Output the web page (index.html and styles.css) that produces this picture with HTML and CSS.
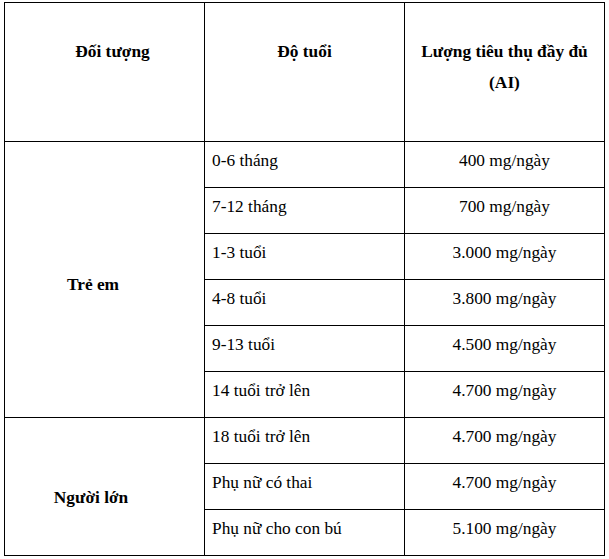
FILE: index.html
```html
<!DOCTYPE html>
<html lang="vi">
<head>
<meta charset="utf-8">
<title>Lượng tiêu thụ đầy đủ</title>
<link rel="stylesheet" href="styles.css">
</head>
<body>
<table class="ai-table">
  <colgroup>
    <col class="col-a">
    <col class="col-b">
    <col class="col-c">
  </colgroup>
  <thead>
    <tr class="head-row">
      <th class="head head-first">Đối tượng</th>
      <th class="head">Độ tuổi</th>
      <th class="head">Lượng tiêu thụ đầy đủ<br>(AI)</th>
    </tr>
  </thead>
  <tbody>
    <tr class="row">
      <td class="group group-kids" rowspan="6">Trẻ em</td>
      <td class="age">0-6 tháng</td>
      <td class="amount">400 mg/ngày</td>
    </tr>
    <tr class="row">
      <td class="age">7-12 tháng</td>
      <td class="amount">700 mg/ngày</td>
    </tr>
    <tr class="row">
      <td class="age">1-3 tuổi</td>
      <td class="amount">3.000 mg/ngày</td>
    </tr>
    <tr class="row">
      <td class="age">4-8 tuổi</td>
      <td class="amount">3.800 mg/ngày</td>
    </tr>
    <tr class="row">
      <td class="age">9-13 tuổi</td>
      <td class="amount">4.500 mg/ngày</td>
    </tr>
    <tr class="row">
      <td class="age">14 tuổi trở lên</td>
      <td class="amount">4.700 mg/ngày</td>
    </tr>
    <tr class="row">
      <td class="group group-adults" rowspan="3">Người lớn</td>
      <td class="age">18 tuổi trở lên</td>
      <td class="amount">4.700 mg/ngày</td>
    </tr>
    <tr class="row">
      <td class="age">Phụ nữ có thai</td>
      <td class="amount">4.700 mg/ngày</td>
    </tr>
    <tr class="row">
      <td class="age">Phụ nữ cho con bú</td>
      <td class="amount">5.100 mg/ngày</td>
    </tr>
  </tbody>
</table>
</body>
</html>
```
FILE: styles.css
```css
html, body {
  background: #ffffff;
}

body {
  margin: 0;
  padding: 2px 0 0 4px;
  font-family: "Liberation Serif", Tinos, "Times New Roman", "DejaVu Serif", serif;
  font-size: 17.33px;
  color: #000000;
}

.ai-table {
  border-collapse: collapse;
  table-layout: fixed;
  width: 600px;
  font-family: "Liberation Serif", Tinos, "Times New Roman", "DejaVu Serif", serif;
}

.col-a { width: 200px; }
.col-b { width: 200px; }
.col-c { width: 200px; }

.ai-table .head,
.ai-table .age,
.ai-table .amount,
.ai-table .group {
  border: 1px solid #000000;
  padding: 0;
  vertical-align: top;
}

.head-row { height: 139px; }
.row { height: 46px; }

.ai-table .head {
  font-weight: bold;
  text-align: center;
  line-height: 31px;
  padding-top: 33px;
}

.ai-table .head-first {
  padding-left: 16px;
}

.ai-table .age {
  text-align: left;
  padding: 9px 4px 0 7px;
  line-height: 20px;
}

.ai-table .amount {
  text-align: center;
  padding-top: 9px;
  line-height: 20px;
}

.ai-table .group {
  font-weight: bold;
  text-align: center;
  vertical-align: middle;
  line-height: 20px;
}

.ai-table .group-kids {
  padding: 11px 23px 0 0;
}

.ai-table .group-adults {
  padding: 22px 27px 0 0;
}
```
